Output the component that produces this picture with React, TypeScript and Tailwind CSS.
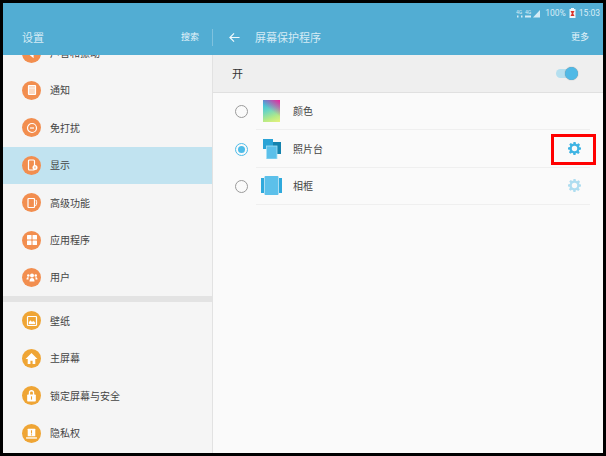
import React from "react";

const O = "bg-[#f28e4f]";
const Y = "bg-[#efa535]";

const Svg = ({ children, size = 12 }: { children: React.ReactNode; size?: number }) => (
  <svg width={size} height={size} viewBox="0 0 24 24" fill="none" stroke="#fff" strokeWidth="2.4">{children}</svg>
);

const icons: Record<string, React.ReactNode> = {
  sound: <Svg><path d="M4 9h4l6-5v16l-6-5H4z" fill="#fff" /></Svg>,
  notify: (
    <Svg>
      <rect x="5" y="3" width="14" height="18" rx="1" fill="#fbd9c2" stroke="#fff" />
      <path d="M8 7v3M12 7v3M16 7v3" strokeWidth="1.6" />
    </Svg>
  ),
  dnd: (
    <Svg>
      <circle cx="12" cy="12" r="9" />
      <path d="M8 12h8" />
    </Svg>
  ),
  display: (
    <Svg>
      <rect x="5" y="2" width="12" height="20" rx="2" />
      <circle cx="18" cy="17" r="5" fill="#fff" stroke="none" />
      <path d="M18 15v4" stroke="#f28e4f" strokeWidth="1.8" />
    </Svg>
  ),
  advanced: (
    <Svg>
      <rect x="4" y="3" width="13" height="18" rx="1.5" />
      <path d="M20 6c2 3 2 8-1 12" strokeWidth="2" />
    </Svg>
  ),
  apps: (
    <svg width="12" height="12" viewBox="0 0 24 24" fill="#fff">
      <rect x="2" y="2" width="9" height="9" rx="1" />
      <rect x="13" y="2" width="9" height="9" rx="1" />
      <rect x="2" y="13" width="9" height="9" rx="1" />
      <rect x="13" y="13" width="9" height="9" rx="1" />
    </svg>
  ),
  users: (
    <svg width="12" height="12" viewBox="0 0 24 24" fill="#fff">
      <circle cx="12" cy="9" r="4" />
      <path d="M7 21c0-5 2-7 5-7s5 2 5 7z" />
      <circle cx="4.5" cy="9" r="2.5" />
      <circle cx="19.5" cy="9" r="2.5" />
      <path d="M1 17c0-3 1-5 4-5v5zM23 17c0-3-1-5-4-5v5z" />
    </svg>
  ),
  wallpaper: (
    <Svg>
      <rect x="3" y="3" width="18" height="18" rx="1.5" />
      <path d="M6 18v-4l3-3 3 3 3-2 3 3v3z" fill="#fff" strokeWidth="0.5" />
    </Svg>
  ),
  home: (
    <svg width="13" height="13" viewBox="0 0 24 24" fill="#fff">
      <path d="M12 2 1 13h4v9h5v-6h4v6h5v-9h4z" />
    </svg>
  ),
  lock: (
    <svg width="13" height="13" viewBox="0 0 24 24" fill="#fff">
      <path d="M7 11V7a5 5 0 0 1 10 0v4h-2.4V7a2.6 2.6 0 0 0-5.2 0v4z" />
      <rect x="4" y="10" width="16" height="13" rx="1.5" />
      <rect x="11" y="13.5" width="2" height="6" fill="#efa535" />
    </svg>
  ),
  privacy: (
    <svg width="13" height="13" viewBox="0 0 24 24" fill="#fff">
      <path d="M6 3h12a1 1 0 0 1 1 1v13H5V4a1 1 0 0 1 1-1z" />
      <rect x="2" y="19" width="20" height="2.5" />
      <rect x="11" y="6" width="2" height="6" fill="#efa535" />
      <rect x="11" y="13.5" width="2" height="2" fill="#efa535" />
    </svg>
  ),
};

const Row = ({ icon, label, color, active, first }: { icon: string; label: string; color: string; active?: boolean; first?: boolean }) => (
  <div className={`flex h-[37.4px] shrink-0 items-center pl-[19px] ${active ? "bg-[#c1e3f0]" : ""} ${first ? "-mt-[20.6px]" : ""}`}>
    <div className={`flex h-[19px] w-[19px] items-center justify-center rounded-full ${color}`}>{icons[icon]}</div>
    <span className="ml-[9px] pt-[2px] text-[10px] leading-none text-[#444]">{label}</span>
  </div>
);

const Gear = ({ light }: { light?: boolean }) => (
  <svg width="13" height="13" viewBox="0 0 24 24" className={light ? "opacity-40" : ""}>
    <path fill="#3fb4e3" fillRule="evenodd" d="M10 0h4l.7 3.4 1.9.8 2.9-1.9 2.8 2.8-1.9 2.9.8 1.9L24 10v4l-3.4.7-.8 1.9 1.9 2.9-2.8 2.8-2.9-1.9-1.9.8L14 24h-4l-.7-3.4-1.9-.8-2.9 1.9-2.8-2.8 1.9-2.9-.8-1.9L0 14v-4l3.4-.7.8-1.9-1.9-2.9 2.8-2.8 2.9 1.9 1.9-.8zM12 7a5 5 0 1 0 0 10 5 5 0 0 0 0-10z" />
  </svg>
);

const Radio = ({ on }: { on?: boolean }) => (
  <div className={`flex h-[13px] w-[13px] shrink-0 items-center justify-center rounded-full border ${on ? "border-[#4fbce8]" : "border-[#9a9a9a]"}`}>
    {on && <div className="h-[7px] w-[7px] rounded-full bg-[#4fbce8]" />}
  </div>
);

const ColorIcon = () => (
  <div className="relative h-[22px] w-[17px] overflow-hidden bg-[linear-gradient(160deg,#22b6ea_0%,#6fd6c0_45%,#b5ea86_75%,#e8f27c_100%)]">
    <div className="absolute inset-0 bg-[linear-gradient(215deg,#f0209a_0%,rgba(240,32,154,0)_50%)]" />
  </div>
);

const PhotoIcon = () => (
  <svg width="18" height="20" viewBox="0 0 18 20">
    <rect x="0" y="0" width="10" height="10" fill="#2aa3d6" />
    <rect x="10" y="3" width="8" height="12" fill="#1583ae" />
    <rect x="3.5" y="7" width="10.5" height="13" fill="#5cc0ea" stroke="#a7e0f5" strokeWidth="0.8" />
  </svg>
);

const FrameIcon = () => (
  <svg width="21" height="19" viewBox="0 0 21 19">
    <rect x="0" y="2" width="3" height="15" fill="#2fa9dc" />
    <rect x="18" y="2" width="3" height="15" fill="#2fa9dc" />
    <rect x="3.5" y="0" width="14" height="19" rx="1" fill="#5cc0ea" />
  </svg>
);

const Option = ({ on, icon, label, gear }: { on?: boolean; icon: React.ReactNode; label: string; gear?: "on" | "off" }) => (
  <div className="flex h-[37.4px] items-center pl-[22px]">
    <Radio on={on} />
    <div className="ml-[8px] mr-[13px] flex h-full flex-1 items-center border-b border-[#efefef]">
      <div className="flex w-[37px] items-center pl-[3.5px]">
        <div className="flex w-[24px] justify-center">{icon}</div>
      </div>
      <span className="pt-[2px] text-[10px] leading-none text-[#444]">{label}</span>
      {gear && (
        <div className="ml-auto mr-[9px] flex">
          <Gear light={gear === "off"} />
        </div>
      )}
    </div>
  </div>
);

const StatusIcons = () => (
  <svg width="24" height="9" viewBox="0 0 24 9" fill="#d4ecf6">
    <text x="0" y="5" fontSize="5" fontFamily="Roboto, sans-serif">4G</text>
    <rect x="1" y="6.5" width="1.5" height="2" />
    <rect x="5" y="6.5" width="1.5" height="2" />
    <text x="9" y="5" fontSize="5" fontFamily="Roboto, sans-serif">4G</text>
    <rect x="9" y="6.5" width="6" height="2" />
    <path d="M24 1v7.5h-7z" />
  </svg>
);

export default function App() {
  return (
    <div className="relative h-[456px] w-[606px] overflow-hidden bg-black p-[3px] font-['Roboto','Noto_Sans_CJK_SC',sans-serif]">
      <div className="flex h-[450px] w-[600px] flex-col bg-[#fafafa]">
        <header className="z-10 h-[52px] shrink-0 bg-[#52add3] text-white">
          <div className="flex h-[17px] items-center justify-end gap-[3px] pr-[3px] pt-[3px] text-[8.5px] leading-none text-[#d9eef7]">
            <StatusIcons />
            <span className="ml-[2px]">100%</span>
            <svg width="7" height="10" viewBox="0 0 7 10">
              <rect x="0.5" y="1" width="6" height="9" fill="#eef7fb" />
              <rect x="2" y="0" width="3" height="1" fill="#eef7fb" />
              <path d="M1.5 3h4L4.2 5.5 5.5 8h-4l1.3-2.5z" fill="#d8342a" />
            </svg>
            <span>15:03</span>
          </div>
          <div className="flex h-[35px] items-center">
            <div className="flex h-[17px] w-[210px] shrink-0 items-center border-r border-[#7fc2de]">
              <span className="ml-[19px] pt-[1px] text-[11px] leading-none text-[#d5ebf5]">设置</span>
              <span className="ml-auto mr-[13px] text-[9px] leading-none text-[#e6f4fa]">搜索</span>
            </div>
            <svg className="ml-[16px]" width="11" height="11" viewBox="0 0 24 24" fill="none" stroke="#f2fafd" strokeWidth="2.6">
              <path d="M23 12H3M11 3l-9 9 9 9" />
            </svg>
            <span className="ml-[15px] pt-[1px] text-[11px] leading-none text-[#d5ebf5]">屏幕保护程序</span>
            <span className="ml-auto mr-[14px] text-[9px] leading-none text-[#e6f4fa]">更多</span>
          </div>
        </header>
        <div className="flex min-h-0 flex-1">
          <aside className="flex w-[210px] shrink-0 flex-col overflow-hidden border-r border-[#e2e2e2] bg-[#f5f5f5]">
            <Row first icon="sound" label="声音和振动" color={O} />
            <Row icon="notify" label="通知" color={O} />
            <Row icon="dnd" label="免打扰" color={O} />
            <Row active icon="display" label="显示" color={O} />
            <Row icon="advanced" label="高级功能" color={O} />
            <Row icon="apps" label="应用程序" color={O} />
            <Row icon="users" label="用户" color={O} />
            <div className="h-[6px] shrink-0 bg-[#e3e3e3]" />
            <Row icon="wallpaper" label="壁纸" color={Y} />
            <Row icon="home" label="主屏幕" color={Y} />
            <Row icon="lock" label="锁定屏幕与安全" color={Y} />
            <Row icon="privacy" label="隐私权" color={Y} />
          </aside>
          <main className="min-w-0 flex-1">
            <div className="flex h-[38px] items-center border-b border-[#e0e0e0] bg-[#efefef] pl-[19px] pr-[25px]">
              <span className="pt-[2px] text-[11px] leading-none text-[#333]">开</span>
              <div className="relative ml-auto h-[9px] w-[22px] rounded-full bg-[#b5dfef]">
                <div className="absolute -top-[2px] right-0 h-[13px] w-[13px] rounded-full bg-[#4fb9e6] shadow-[0_0_1px_#777]" />
              </div>
            </div>
            <Option icon={<ColorIcon />} label="颜色" />
            <Option on icon={<PhotoIcon />} label="照片台" gear="on" />
            <Option icon={<FrameIcon />} label="相框" gear="off" />
          </main>
        </div>
      </div>
      <div className="absolute left-[551px] top-[134px] h-[31px] w-[45px] border-[3px] border-[#ff0000]" />
    </div>
  );
}
